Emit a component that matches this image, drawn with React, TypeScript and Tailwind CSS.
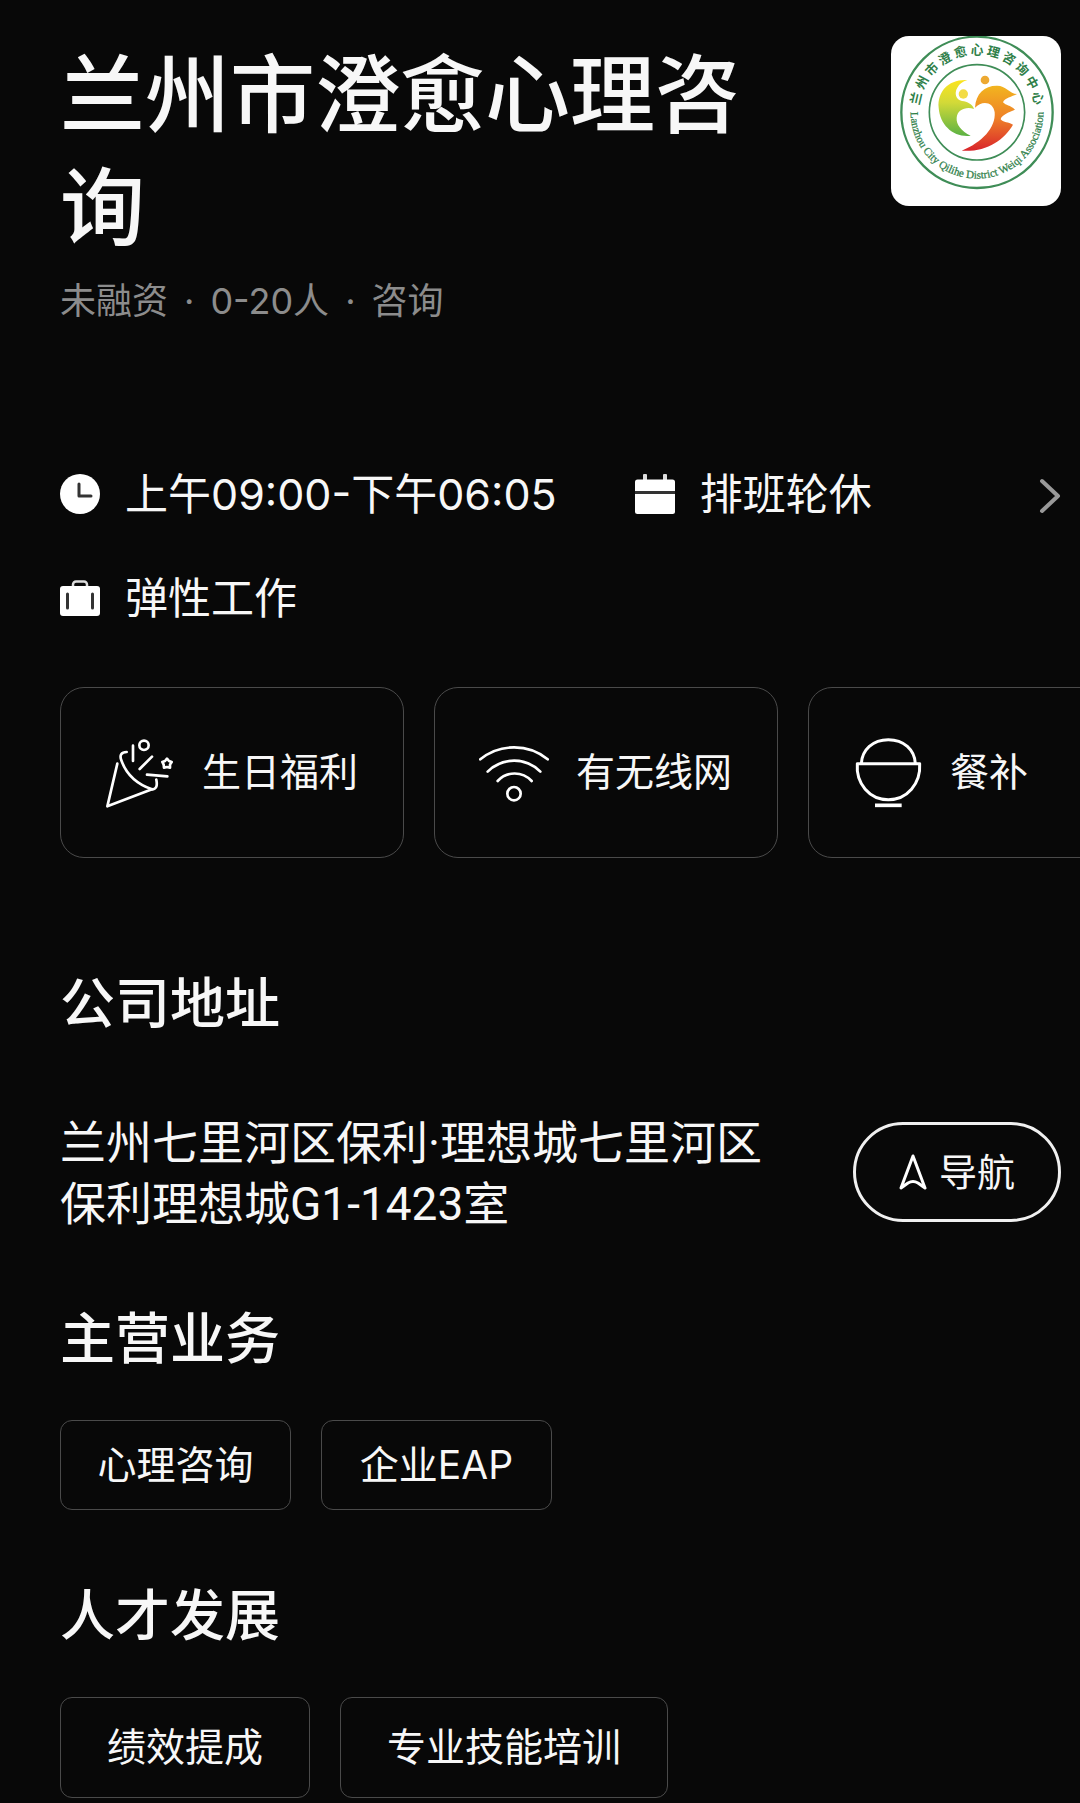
import type { ReactNode } from "react";

const sealName = "兰州市澄愈心理咨询中心";

const schedule = [
  { icon: <ClockIcon />, label: "上午09:00-下午06:05" },
  { icon: <CalendarIcon />, label: "排班轮休" },
  { icon: <BriefcaseIcon />, label: "弹性工作" },
];

const benefits = [
  { icon: <PartyIcon />, label: "生日福利" },
  { icon: <WifiIcon />, label: "有无线网" },
  { icon: <BowlIcon />, label: "餐补" },
];

const business = ["心理咨询", "企业EAP"];
const growth = ["绩效提成", "专业技能培训"];

function ClockIcon() {
  return (
    <svg className="size-10 shrink-0" viewBox="0 0 40 40" fill="none">
      <circle cx="20" cy="20" r="20" fill="#fff" />
      <path d="M19 10v12h12" stroke="#333" strokeWidth="3" strokeLinecap="round" strokeLinejoin="round" />
    </svg>
  );
}

function CalendarIcon() {
  return (
    <svg className="size-10 shrink-0" viewBox="0 0 40 40" fill="#fff">
      <rect x="8" y="0" width="4" height="9" rx="1" fill="#ddd" />
      <rect x="28" y="0" width="4" height="9" rx="1" fill="#ddd" />
      <path d="M2.500 5.500h35a2.500 2.500 0 0 1 2.500 2.500v9H0V8a2.500 2.500 0 0 1 2.500-2.500z" />
      <path d="M0 20h40v17.500a2.500 2.500 0 0 1-2.500 2.500h-35A2.500 2.500 0 0 1 0 37.500z" />
      <rect y="17" width="40" height="3" fill="#333" />
    </svg>
  );
}

function BriefcaseIcon() {
  return (
    <svg className="size-10 shrink-0" viewBox="0 0 40 40" fill="none">
      <path d="M13 9V6.500a3 3 0 0 1 3-3h8a3 3 0 0 1 3 3V9" stroke="#ddd" strokeWidth="2.500" />
      <rect x="0" y="8" width="40" height="30" rx="3" fill="#fff" />
      <path d="M7.500 16v14M32.500 16v14" stroke="#333" strokeWidth="3" strokeLinecap="round" />
    </svg>
  );
}

function PartyIcon() {
  return (
    <svg className="size-[70px] shrink-0" viewBox="165 173 210 210" fill="none" stroke="#fff" strokeWidth="8" strokeLinecap="round" strokeLinejoin="round">
      <path d="M202 250L172 378L306 327" />
      <path d="M230 215C214 215 208 224 214 240C230 285 262 312 306 327C318 327 323 318 319 298" />
      <circle cx="282" cy="195" r="14" />
      <path d="M249 196v46M306 229l-37 37M291 283l61 5" />
      <path d="M351 235L357 242L365 245L360 253L360 262L351 260L342 262L341 253L337 245L345 242z" />
    </svg>
  );
}

function WifiIcon() {
  return (
    <svg className="size-[70px] shrink-0" viewBox="176 173 210 210" fill="none" stroke="#fff" strokeWidth="8" strokeLinecap="round">
      <path d="M180 237C238 189 325 189 382 237" />
      <path d="M202 274C246 230 317 230 360 274" />
      <path d="M232 302C260 272 306 272 334 302" />
      <circle cx="281" cy="340" r="20" />
    </svg>
  );
}

function BowlIcon() {
  return (
    <svg className="size-[70px] shrink-0" viewBox="190 173 210 210" fill="none" stroke="#fff" strokeWidth="9" strokeLinejoin="round">
      <path d="M215 250C217 208 250 178 296 178C342 178 375 208 377 250" />
      <path d="M203 250H390C394 310 352 358 296 358C240 358 198 310 203 250z" />
      <path d="M256 375h80" strokeWidth="11" />
    </svg>
  );
}

function Logo() {
  return (
    <svg className="size-[170px] shrink-0 rounded-[18px] bg-white" viewBox="33 33 510 510" role="img" aria-label={sealName}>
      <defs>
        <linearGradient id="leaf" x1="0" y1="0" x2="0" y2="1">
          <stop offset="0" stopColor="#fbe41f" />
          <stop offset="0.400" stopColor="#d3da38" />
          <stop offset="1" stopColor="#5cb244" />
        </linearGradient>
        <linearGradient id="flame" x1="0" y1="0" x2="0" y2="1">
          <stop offset="0" stopColor="#f2b51f" />
          <stop offset="0.500" stopColor="#ee8028" />
          <stop offset="1" stopColor="#d9252b" />
        </linearGradient>
        <path id="seal-arc" d="M93 242A199 199 0 1 0 489 242" />
      </defs>
      <g fill="none" stroke="#3f8d57">
        <circle cx="291" cy="262" r="227" strokeWidth="7" />
        <circle cx="291" cy="262" r="143" strokeWidth="5" />
      </g>
      <g className="font-['Noto_Sans_CJK_SC',sans-serif] font-bold" fill="#2f8049" fontSize="38" textAnchor="middle">
        {sealName.split("").map((char, i) => (
          <text key={i} x="291" y="88" transform={`rotate(${(i - 5) * 15.4} 291 262)`}>
            {char}
          </text>
        ))}
      </g>
      <text className="font-['Liberation_Serif',serif]" fill="#2f8049" stroke="#2f8049" strokeWidth="0.800" fontSize="33">
        <textPath href="#seal-arc" startOffset="50%" textAnchor="middle">
          Lanzhou City Qilihe District Weiqi Association
        </textPath>
      </text>
      <path fill="url(#leaf)" d="M262 165C205 162 172 200 176 248C180 302 222 338 272 332C244 318 228 298 230 278C232 254 258 244 282 252C278 238 262 230 246 228C228 224 222 204 232 188C238 177 248 169 262 165z" />
      <circle cx="250" cy="207" r="14" fill="#f3dc45" />
      <path fill="url(#flame)" d="M285 248C287 205 315 181 352 182C376 182 390 206 411 207C396 215 374 219 369 232C378 242 390 240 405 254C386 262 364 270 362 283C372 294 384 290 399 299C372 346 318 382 245 377C306 353 348 308 344 262C340 230 306 225 285 248z" />
      <circle cx="315" cy="165" r="13" fill="#eda932" />
    </svg>
  );
}

function SectionTitle({ children }: { children: ReactNode }) {
  return <h2 className="text-[55px] leading-[76px] font-medium">{children}</h2>;
}

export default function App() {
  return (
    <main className="min-h-screen overflow-hidden bg-[#080808] pt-8 pb-1 pl-[60px] font-['Noto_Sans_CJK_SC',sans-serif] text-[#f7f7f7]">
      <header className="flex items-start gap-20 pr-[19px]">
        <h1 className="flex-1 text-[85px] leading-[113px] font-medium">兰州市澄愈心理咨询</h1>
        <div className="pt-1">
          <Logo />
        </div>
      </header>
      <p className="mt-[18px] flex gap-4 font-['Inter','Noto_Sans_CJK_SC',sans-serif] text-[36px] leading-[50px] text-[#8c8c8c]">
        <span>未融资</span>
        <span>·</span>
        <span>0-20人</span>
        <span>·</span>
        <span>咨询</span>
      </p>

      {/* 工作时间 */}
      <section className="mt-[136px] flex items-start pr-[19px]">
        <ul className="flex flex-1 flex-wrap gap-x-[78px] gap-y-10">
          {schedule.map((item) => (
            <li key={item.label} className="flex items-center gap-[25px] font-['Inter','Noto_Sans_CJK_SC',sans-serif] text-[43px] leading-[64px]">
              {item.icon}
              {item.label}
            </li>
          ))}
        </ul>
        <button className="flex h-[68px] items-center" aria-label="查看工作时间">
          <svg className="h-9 w-[22px]" viewBox="0 0 22 36" fill="none" stroke="#999" strokeWidth="4" strokeLinecap="round" strokeLinejoin="round">
            <path d="M3 3l16 15L3 33" />
          </svg>
        </button>
      </section>

      {/* 福利 */}
      <ul className="mt-[57px] flex gap-[30px] overflow-x-auto [scrollbar-width:none]">
        {benefits.map((item) => (
          <li key={item.label} className="flex h-[171px] w-[344px] shrink-0 items-center gap-[27px] rounded-3xl border border-[#4a4a4a] pl-11 font-['Inter','Noto_Sans_CJK_SC',sans-serif] text-[39px]">
            {item.icon}
            {item.label}
          </li>
        ))}
      </ul>

      <section className="mt-[103px] pr-[19px]">
        <SectionTitle>公司地址</SectionTitle>
        <div className="mt-[72px] flex items-center gap-[60px]">
          <p className="flex-1 pt-1 font-['Roboto','Noto_Sans_CJK_SC',sans-serif] text-[46px] leading-[61px]">兰州七里河区保利·理想城七里河区保利理想城G1-1423室</p>
          <button className="flex h-[100px] w-[208px] shrink-0 items-center justify-center gap-3 rounded-full border-[3px] border-[#f0f0f0] font-['Inter','Noto_Sans_CJK_SC',sans-serif] text-[38px]">
            <svg className="h-9 w-7" viewBox="0 0 28 36" fill="none" stroke="#fff" strokeWidth="3" strokeLinejoin="round">
              <path d="M14 2L26 34L19 29Q14 26 9 29L2 34z" />
            </svg>
            导航
          </button>
        </div>
      </section>

      <section className="mt-[61px] pr-[19px]">
        <SectionTitle>主营业务</SectionTitle>
        <ul className="mt-12 flex flex-wrap gap-[30px]">
          {business.map((tag) => (
            <li key={tag} className="flex h-[90px] min-w-[231px] items-center justify-center rounded-xl border border-[#4a4a4a] px-9 font-['Inter','Noto_Sans_CJK_SC',sans-serif] text-[39px]">
              {tag}
            </li>
          ))}
        </ul>
      </section>

      <section className="mt-[63px] pr-[19px]">
        <SectionTitle>人才发展</SectionTitle>
        <ul className="mt-12 flex flex-wrap gap-[30px]">
          {growth.map((tag) => (
            <li key={tag} className="flex h-[101px] items-center justify-center rounded-xl border border-[#4a4a4a] px-[46px] font-['Inter','Noto_Sans_CJK_SC',sans-serif] text-[39px]">
              {tag}
            </li>
          ))}
        </ul>
      </section>
    </main>
  );
}
